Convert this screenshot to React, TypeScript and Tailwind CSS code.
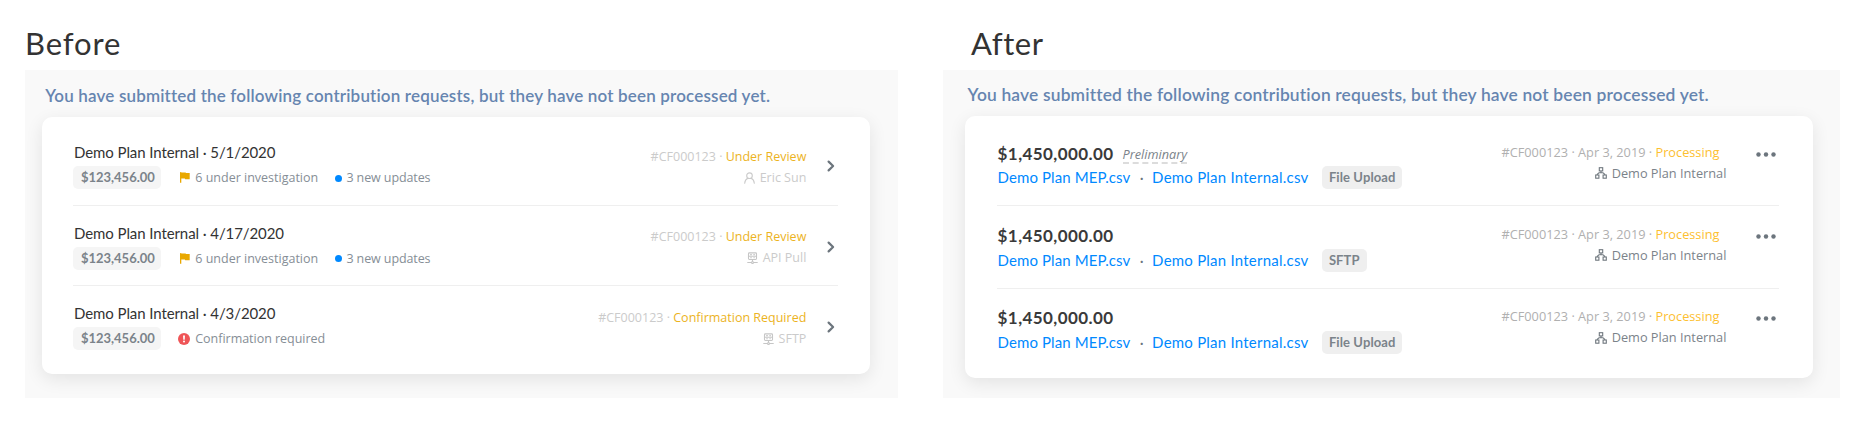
import React from "react";

const lato = "font-['Lato','Open_Sans',sans-serif]";

function Flag() {
  return (
    <svg className="h-[11px] w-[10px] shrink-0" viewBox="0 0 10 11" fill="#e9a800">
      <path d="M0 .2h1.3v10.6H0z" />
      <path d="M0 .4h5.6l.4.7h3.7v6.1H5.2l-.4-.6H0z" />
    </svg>
  );
}

function Alert() {
  return (
    <svg className="h-[12px] w-[12px] shrink-0" viewBox="0 0 12 12">
      <circle cx="6" cy="6" r="6" fill="#ef5557" />
      <path d="M5 2.6h2l-.3 4.1H5.3z" fill="#fff" />
      <circle cx="6" cy="8.6" r="1" fill="#fff" />
    </svg>
  );
}

function UserIcon() {
  return (
    <svg className="h-[12px] w-[11px] shrink-0" viewBox="0 0 11 12" fill="none" stroke="#cbcbcb" strokeWidth="1.1" strokeLinecap="round">
      <circle cx="5.5" cy="3.7" r="2.8" />
      <path d="M.7 11.2c.2-2.6 1.5-4.2 3.2-4.9M10.3 11.2c-.2-2.6-1.5-4.2-3.2-4.9" />
    </svg>
  );
}

function ServerIcon() {
  return (
    <svg className="h-[12px] w-[11px] shrink-0" viewBox="0 0 11 12" fill="none" stroke="#c6c6c6" strokeWidth="1.1">
      <rect x="1.5" y="0.9" width="8" height="6.6" rx="0.9" />
      <path d="M1.5 4.2h8M3.2 2.6h1.6M3.2 5.8h1.6M6.4 2.6h1.4M6.4 5.8h1.4M5.5 7.5v2M.3 10.5h3.8M6.9 10.5h3.8" />
      <circle cx="5.5" cy="10.5" r="1" />
    </svg>
  );
}

function TreeIcon() {
  return (
    <svg className="h-[12px] w-[12px] shrink-0" viewBox="0 0 12 12" fill="none" stroke="#6f777e" strokeWidth="1.1">
      <rect x="4.3" y="0.7" width="3.4" height="3.2" />
      <rect x="0.7" y="8" width="3.2" height="3.2" />
      <rect x="8.1" y="8" width="3.2" height="3.2" />
      <path d="M6 3.9v2M2.3 8V7.2L4 5.8h4l1.7 1.4V8" />
    </svg>
  );
}

function Chevron() {
  return (
    <svg className="h-[12px] w-[8px] shrink-0" viewBox="0 0 8 12" fill="none" stroke="#6c757d" strokeWidth="2.2" strokeLinecap="round" strokeLinejoin="round">
      <path d="M1.6 1.6 6.1 6l-4.5 4.4" />
    </svg>
  );
}

function Dots() {
  return (
    <svg className="h-[5px] w-[20px] shrink-0" viewBox="0 0 20 5" fill="#6c757d">
      <circle cx="2.5" cy="2.5" r="2.2" />
      <circle cx="10" cy="2.5" r="2.2" />
      <circle cx="17.5" cy="2.5" r="2.2" />
    </svg>
  );
}

type Before = { title: string; status: string; source: string; icon: React.ReactNode; confirm?: boolean };

const before: Before[] = [
  { title: "Demo Plan Internal · 5/1/2020", status: "Under Review", source: "Eric Sun", icon: <UserIcon /> },
  { title: "Demo Plan Internal · 4/17/2020", status: "Under Review", source: "API Pull", icon: <ServerIcon /> },
  { title: "Demo Plan Internal · 4/3/2020", status: "Confirmation Required", source: "SFTP", icon: <ServerIcon />, confirm: true },
];

const after = [
  { tag: "File Upload", preliminary: true },
  { tag: "SFTP", preliminary: false },
  { tag: "File Upload", preliminary: false },
];

function BeforeRow({ row }: { row: Before }) {
  return (
    <li className="flex h-[80.5px] justify-between border-b border-[#efefef] pt-[16.6px] last:border-transparent">
      <div>
        <h3 className={`${lato} h-[24.1px] pl-[0.6px] text-[15px] leading-[20px] tracking-[-0.09px] text-[#333]`}>{row.title}</h3>
        <div className="flex h-[23px] items-center text-[12.5px] text-[#868e96]">
          <span className={`${lato} h-[23px] w-[88px] rounded-[5px] bg-[#f5f5f5] pl-[7.4px] text-[13px] font-bold leading-[22.4px] text-[#7b838a]`}>
            $123,456.00
          </span>
          {row.confirm ? (
            <span className="ml-[17px] flex items-center gap-[4.8px] leading-[24px] tracking-[-0.03px]">
              <Alert />
              <span className="pt-[1.6px]">Confirmation required</span>
            </span>
          ) : (
            <>
              <span className="ml-[18.5px] flex items-center gap-[5.3px] leading-[24px]">
                <Flag />
                <span className="pt-[1.6px]">6 under investigation</span>
              </span>
              <span className="ml-[17px] flex items-center gap-[4.2px] leading-[24px] tracking-[-0.1px]">
                <i className="mt-px size-[7px] rounded-full bg-[#0089ff]" />
                <span className="pt-[1.6px]">3 new updates</span>
              </span>
            </>
          )}
        </div>
      </div>
      <div className="flex pt-[4.7px]">
        <div className="text-right text-[12.5px] leading-[20.8px] text-[#cbcbcb]">
          <p>
            #CF000123 · <span className="text-[#ecb31e]">{row.status}</span>
          </p>
          <p className="flex items-center justify-end gap-[5px]">
            {row.icon}
            <span>{row.source}</span>
          </p>
        </div>
        <div className="ml-[20.7px] mr-[3px] pt-[13.3px]">
          <Chevron />
        </div>
      </div>
    </li>
  );
}

function AfterRow({ tag, preliminary }: { tag: string; preliminary: boolean }) {
  return (
    <li className="flex h-[82.3px] justify-between border-b border-[#efefef] pt-[17.4px] last:border-transparent">
      <div className={lato}>
        <div className="flex h-[24.8px] pl-[0.6px] leading-[23.4px]">
          <strong className="text-[17px] font-bold tracking-[0.41px] text-[#3a3a3a]">$1,450,000.00</strong>
          {preliminary && (
            <em className="ml-[9px] h-[22.8px] border-b-2 border-dashed border-[#dcdcdc] pt-[1px] font-['Open_Sans',sans-serif] text-[12.7px] leading-[23.4px] text-[#7b838a]">
              Preliminary
            </em>
          )}
        </div>
        <div className="flex pl-[0.6px] text-[15px] leading-[22.4px] text-[#0089ff]">
          <a className="w-[133.5px] tracking-[0.11px]">Demo Plan MEP.csv</a>
          <span className="w-[21px] text-center text-[#6c757d]">·</span>
          <a className="w-[169.9px] tracking-[0.23px]">Demo Plan Internal.csv</a>
          <span className="h-[23px] rounded-[5px] bg-[#efefef] px-[6.9px] text-[13px] font-bold leading-[22px] tracking-[0.1px] text-[#7b838a]">
            {tag}
          </span>
        </div>
      </div>
      <div className="flex">
        <div className="text-right text-[12.75px] leading-[21px]">
          <p className="pr-[7px] text-[#b0b0b0]">
            #CF000123 · Apr 3, 2019 · <span className="text-[#fdc02f]">Processing</span>
          </p>
          <p className="flex items-center justify-end gap-[4.5px] text-[#7b838a]">
            <TreeIcon />
            <span>Demo Plan Internal</span>
          </p>
        </div>
        <div className="ml-[29.6px] mr-[3px] pt-[10px]">
          <Dots />
        </div>
      </div>
    </li>
  );
}

export default function App() {
  return (
    <main className="flex h-[428px] w-[1870px] items-start gap-[45px] overflow-hidden whitespace-nowrap bg-white pl-[25px] pt-[22px] font-['Open_Sans',sans-serif]">
      <section className="w-[873px]">
        <h1 className={`${lato} mb-[6.3px] text-[31px] leading-[42px] tracking-[0.9px] text-[#333]`}>Before</h1>
        <div className="h-[327.5px] overflow-hidden bg-[#f9f9f9] pl-[17.2px] pt-[16px]">
          <h2 className={`${lato} mb-[10.7px] pl-[3px] text-[17px] font-semibold leading-[20px] tracking-[0.17px] text-[#6685b0]`}>
            You have submitted the following contribution requests, but they have not been processed yet.
          </h2>
          <ul className="h-[257px] w-[828px] rounded-[10px] bg-white pl-[31.3px] pr-[32.2px] pt-[8.5px] shadow-[0_5px_18px_rgba(0,0,0,0.09)]">
            {before.map((row) => (
              <BeforeRow key={row.title} row={row} />
            ))}
          </ul>
        </div>
      </section>
      <section className="w-[897px]">
        <h1 className={`${lato} mb-[6.3px] pl-[28px] text-[31px] leading-[42px] tracking-[0.55px] text-[#333]`}>After</h1>
        <div className="h-[327.5px] overflow-hidden bg-[#f9f9f9] pl-[22px] pt-[14.3px]">
          <h2 className={`${lato} mb-[11.4px] pl-[2.6px] text-[17.4px] font-semibold leading-[20px] tracking-[0.17px] text-[#6685b0]`}>
            You have submitted the following contribution requests, but they have not been processed yet.
          </h2>
          <ul className="h-[262.5px] w-[847.5px] rounded-[10px] bg-white pl-[32px] pr-[33.5px] pt-[8.2px] shadow-[0_5px_18px_rgba(0,0,0,0.09)]">
            {after.map((row, i) => (
              <AfterRow key={i} tag={row.tag} preliminary={row.preliminary} />
            ))}
          </ul>
        </div>
      </section>
    </main>
  );
}
